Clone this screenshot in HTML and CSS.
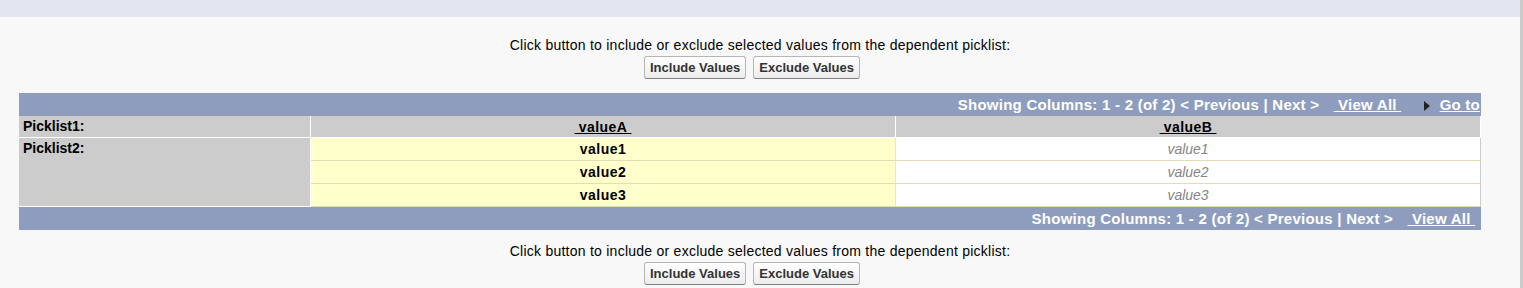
FILE: index.html
```html
<!DOCTYPE html>
<html lang="en">
<head>
    <meta charset="UTF-8">
    <title>Field Dependency Matrix</title>
    <link rel="stylesheet" href="styles.css">
</head>
<body>
    <div class="top-bar"></div>

    <div class="page">
        <!-- Botões de cima -->
        <div class="actions">
            <p class="hint">Click button to include or exclude selected values from the dependent picklist:</p>
            <div class="buttons">
                <button class="btn">Include Values</button>
                <button class="btn">Exclude Values</button>
            </div>
        </div>

        <!-- Matriz de valores -->
        <table class="matrix">
            <colgroup>
                <col class="col-label">
                <col class="col-value">
                <col class="col-value">
            </colgroup>
            <tr class="paging">
                <td colspan="3">
                    Showing Columns: 1 - 2 (of 2) &lt; Previous | Next &gt;
                    <a class="link view-all" href="#">&nbsp;View All&nbsp;</a>
                    <span class="arrow"></span><a class="link" href="#">Go to</a>
                </td>
            </tr>
            <tr class="head">
                <th class="label">Picklist1:</th>
                <th class="colname"><span>&nbsp;valueA&nbsp;</span></th>
                <th class="colname"><span>&nbsp;valueB&nbsp;</span></th>
            </tr>
            <tr>
                <th class="label" rowspan="3">Picklist2:</th>
                <td class="included">value1</td>
                <td class="excluded">value1</td>
            </tr>
            <tr>
                <td class="included">value2</td>
                <td class="excluded">value2</td>
            </tr>
            <tr>
                <td class="included">value3</td>
                <td class="excluded">value3</td>
            </tr>
            <tr class="paging bottom">
                <td colspan="3">
                    Showing Columns: 1 - 2 (of 2) &lt; Previous | Next &gt;
                    <a class="link view-all" href="#">&nbsp;View All&nbsp;</a>
                </td>
            </tr>
        </table>

        <!-- Botões de baixo -->
        <div class="actions lower">
            <p class="hint">Click button to include or exclude selected values from the dependent picklist:</p>
            <div class="buttons">
                <button class="btn">Include Values</button>
                <button class="btn">Exclude Values</button>
            </div>
        </div>
    </div>
</body>
</html>
```

FILE: styles.css
```css
/* Corpo da página */
html, body {
    height: 100%;
}

body {
    margin: 0;
    box-sizing: border-box;
    background-color: #f8f8f8;
    border-right: 3px solid #cbcbcb;
    font-family: "Liberation Sans", Arial, sans-serif;
    color: #000;
}

.top-bar {
    height: 17px;
    background-color: #e3e6f0;
}

.page {
    padding: 20px 0 0 19px;
}

/* Texto e botões */
.actions {
    text-align: center;
    margin-left: -19px;
}

.actions.lower {
    margin-top: 13px;
}

.hint {
    margin: 0;
    font-size: 14px;
    line-height: 16px;
    letter-spacing: 0.25px;
}

.buttons {
    display: flex;
    justify-content: center;
    gap: 7px;
    margin-top: 3px;
    padding-right: 16px;
}

.btn {
    height: 23px;
    padding: 0 5px;
    font-family: "Liberation Sans", Arial, sans-serif;
    font-size: 13px;
    font-weight: bold;
    color: #333;
    background: linear-gradient(#ffffff, #ececec);
    border: 1px solid #b5b5b5;
    border-bottom-color: #7f7f7f;
    border-radius: 3px;
}

/* Tabela */
.matrix {
    margin-top: 14px;
    width: 1462px;
    table-layout: fixed;
    border-collapse: separate;
    border-spacing: 0;
}

.col-label {
    width: 292px;
}

.col-value {
    width: 585px;
}

.paging td {
    height: 23px;
    padding: 0 1px 0 0;
    box-sizing: border-box;
    background-color: #8e9dbe;
    color: #fff;
    font-size: 15px;
    font-weight: bold;
    letter-spacing: 0.25px;
    text-align: right;
    white-space: nowrap;
}

.paging.bottom td {
    padding-right: 6px;
}

.link {
    color: #fff;
    text-decoration: underline;
}

.view-all {
    margin-left: 10px;
}

.arrow {
    display: inline-block;
    width: 0;
    height: 0;
    margin: 0 10px 0 18px;
    border-top: 5px solid transparent;
    border-bottom: 5px solid transparent;
    border-left: 6px solid #222;
    vertical-align: -1px;
}

.matrix th,
.matrix td.included {
    font-size: 14px;
    line-height: 16px;
}

.label {
    background-color: #cccccc;
    border-right: 1px solid #fff;
    border-bottom: 1px solid #fff;
    padding: 2px 4px;
    text-align: left;
    vertical-align: top;
    font-weight: bold;
}

.head th {
    height: 22px;
    box-sizing: border-box;
}

.colname {
    background-color: #cccccc;
    border-right: 1px solid #fff;
    border-bottom: 1px solid #fff;
    padding: 3px 0 2px;
    font-weight: bold;
    letter-spacing: 0.4px;
}

.colname span {
    text-decoration: underline;
}

.included,
.excluded {
    height: 23px;
    box-sizing: border-box;
    padding: 3px 0;
    text-align: center;
    border-bottom: 1px solid #e3dcb4;
}

.included {
    background-color: #ffffcc;
    border-right: 1px solid #e4e4e4;
    font-weight: bold;
    letter-spacing: 0.5px;
}

.excluded {
    background-color: #fff;
    border-right: 1px solid #cccccc;
    font-size: 14px;
    line-height: 16px;
    font-style: italic;
    color: #858585;
}
```
